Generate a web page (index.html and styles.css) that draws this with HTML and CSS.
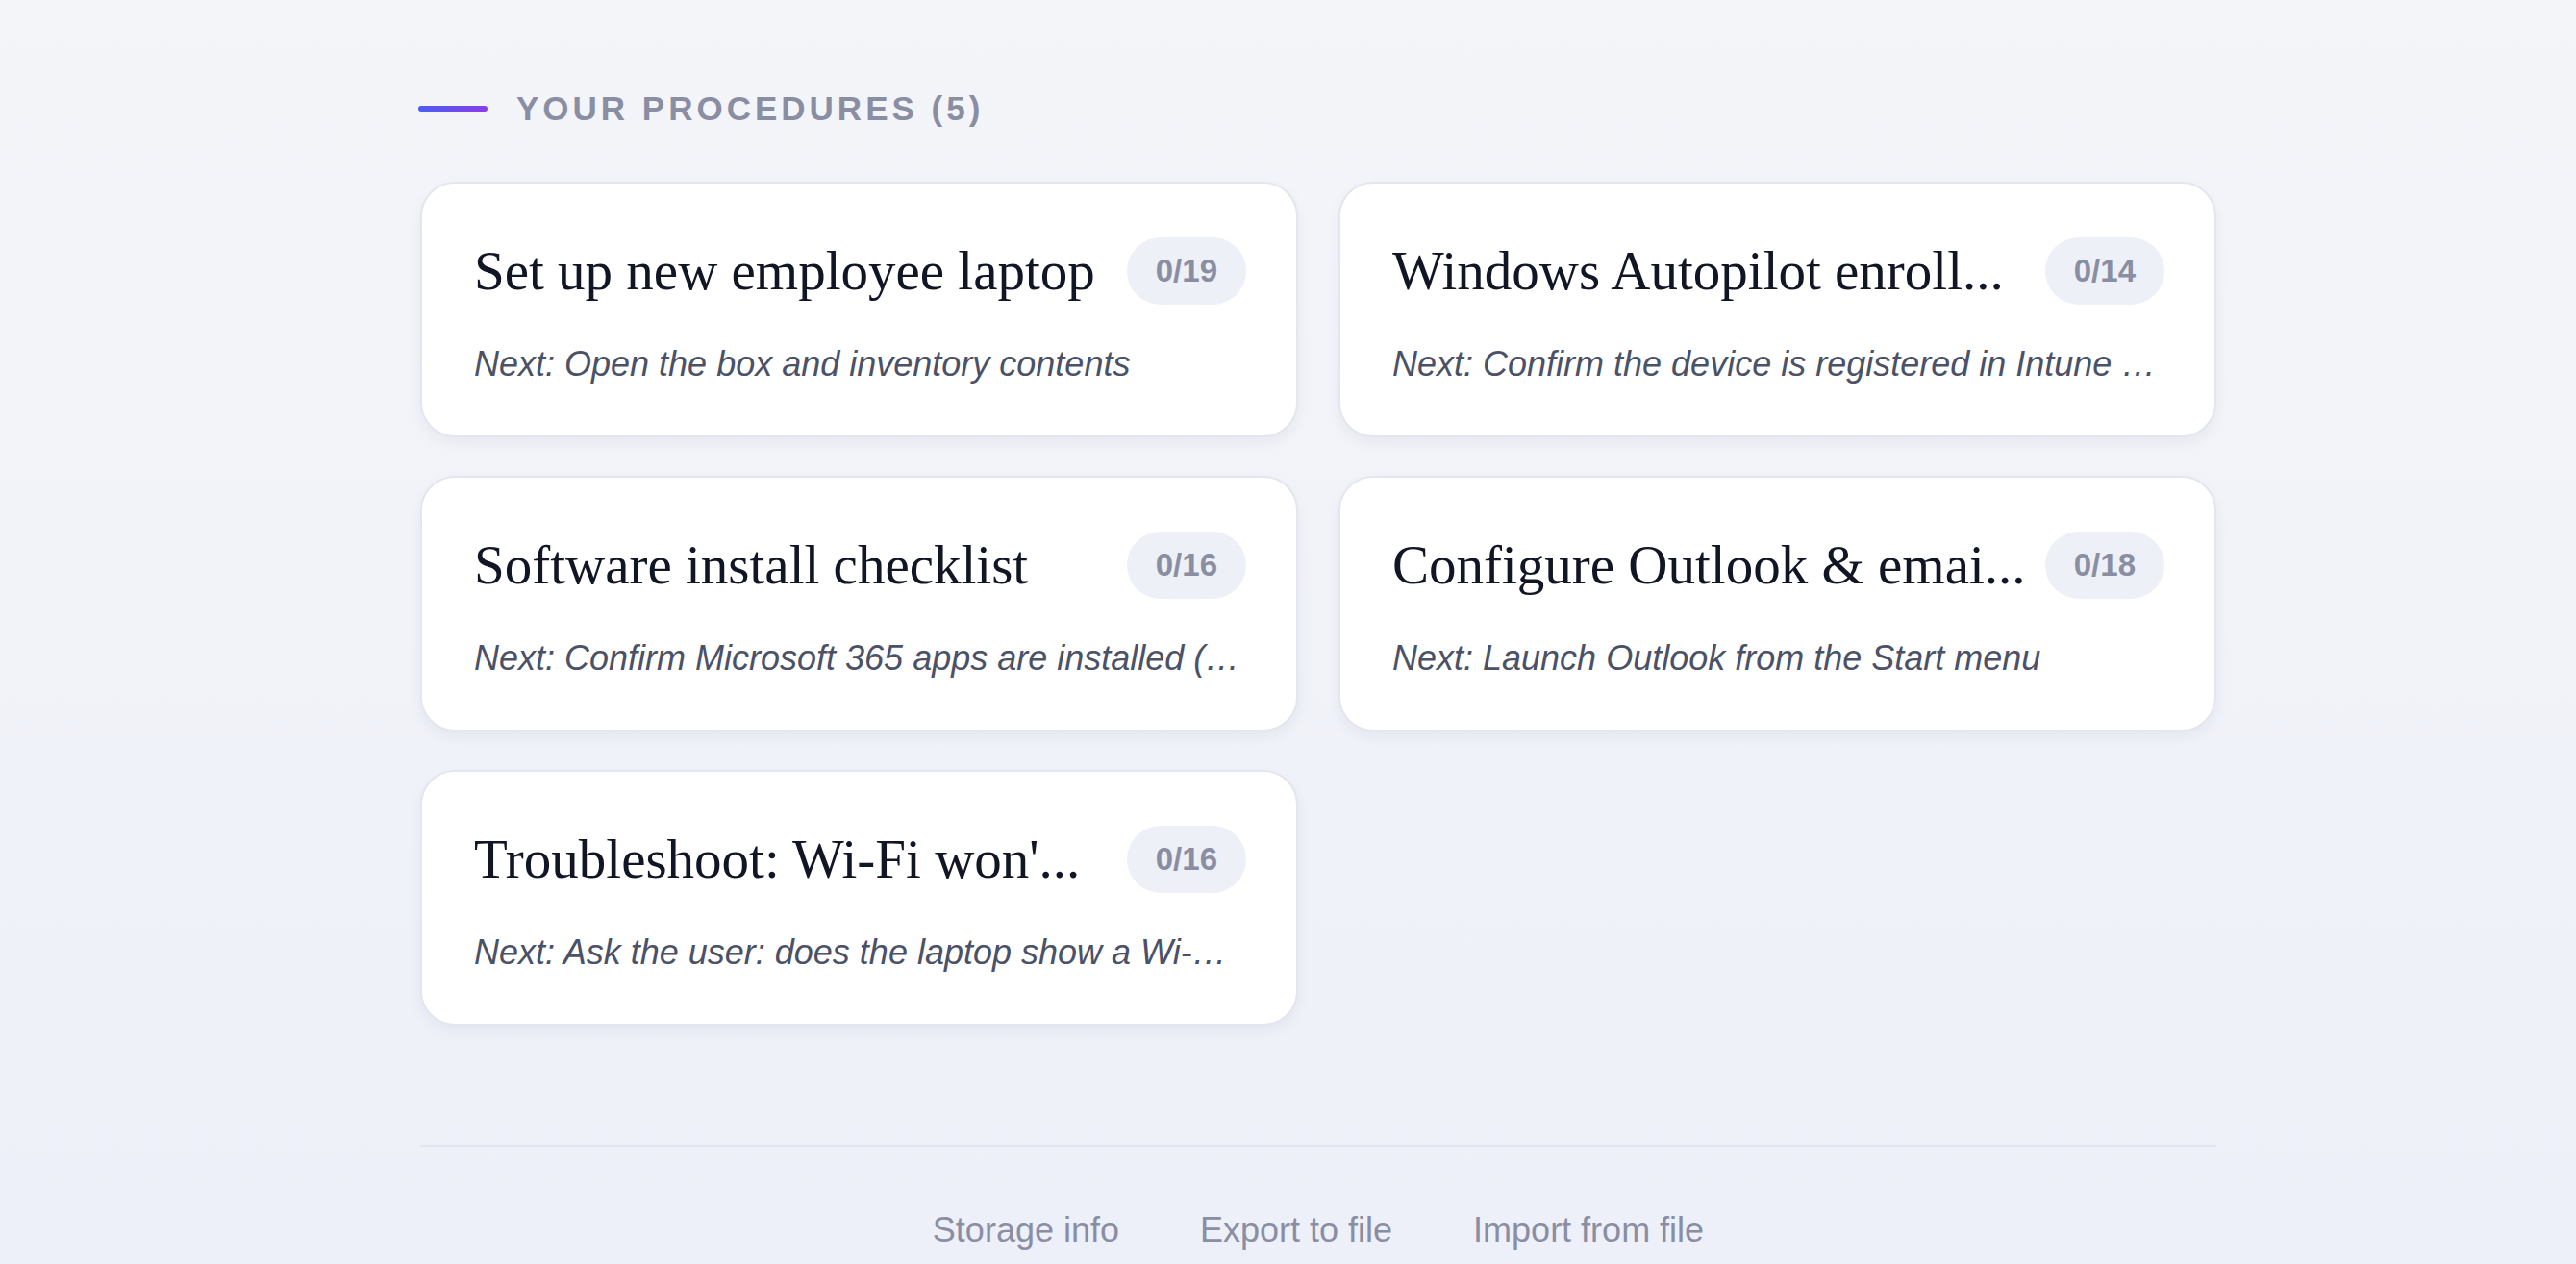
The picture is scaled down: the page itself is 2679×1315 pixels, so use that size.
FILE: index.html
```html
<!DOCTYPE html>
<html lang="en">
<head>
    <meta charset="UTF-8">
    <meta name="viewport" content="width=device-width, initial-scale=1.0">
    <title>Procedures</title>
<link rel="stylesheet" href="styles.css">
</head>
<body>
    <div id="page">
        <div class="section-head">
            <span class="head-bar"></span>
            <h2>Your procedures (5)</h2>
        </div>

        <div class="cards">
            <div class="card">
                <div class="card-top">
                    <h3>Set up new employee laptop</h3>
                    <span class="count">0/19</span>
                </div>
                <p class="next">Next: Open the box and inventory contents</p>
            </div>
            <div class="card">
                <div class="card-top">
                    <h3>Windows Autopilot enroll...</h3>
                    <span class="count">0/14</span>
                </div>
                <p class="next">Next: Confirm the device is registered in Intune (Devices &gt; Enroll devices)</p>
            </div>
            <div class="card">
                <div class="card-top">
                    <h3>Software install checklist</h3>
                    <span class="count">0/16</span>
                </div>
                <p class="next">Next: Confirm Microsoft 365 apps are installed (Word, Excel, Outlook)</p>
            </div>
            <div class="card">
                <div class="card-top">
                    <h3>Configure Outlook &amp; emai...</h3>
                    <span class="count">0/18</span>
                </div>
                <p class="next">Next: Launch Outlook from the Start menu</p>
            </div>
            <div class="card">
                <div class="card-top">
                    <h3>Troubleshoot: Wi-Fi won'...</h3>
                    <span class="count">0/16</span>
                </div>
                <p class="next">Next: Ask the user: does the laptop show a Wi-Fi icon in the taskbar?</p>
            </div>
        </div>

        <div class="footer">
            <a href="#">Storage info</a>
            <a href="#">Export to file</a>
            <a href="#">Import from file</a>
        </div>
    </div>
</body>
</html>
```

FILE: styles.css
```css
:root {
    --bg-top: #f4f5f9;
    --bg-bottom: #edf0f8;
    --card-bg: #ffffff;
    --card-border: #e3e6ee;
    --title-color: #111625;
    --text-muted: #4b5166;
    --grey: #898ea3;
    --pill-bg: #eef0f7;
}

html {
    min-height: 100%;
    background: linear-gradient(180deg, var(--bg-top), var(--bg-bottom));
}

body {
    margin: 0;
    padding: 0;
    font-family: 'Liberation Sans', Arial, sans-serif;
    color: var(--title-color);
}

#page {
    width: 1868px;
    margin-left: 437px;
    padding-top: 91px;
}

.section-head {
    display: flex;
    align-items: center;
    height: 44px;
    margin-bottom: 54px;
}

.head-bar {
    width: 72px;
    height: 6px;
    border-radius: 3px;
    margin-left: -2px;
    margin-right: 30px;
    background: linear-gradient(to right, #4a5ff1, #8b3de8);
}

.section-head h2 {
    margin: 0;
    font-size: 35px;
    line-height: 44px;
    font-weight: bold;
    text-transform: uppercase;
    letter-spacing: 4px;
    color: var(--grey);
}

.cards {
    display: grid;
    grid-template-columns: 1fr 1fr;
    gap: 40px 42px;
}

.card {
    background: var(--card-bg);
    border: 2px solid var(--card-border);
    border-radius: 36px;
    padding: 56px 52px 49px 54px;
    box-shadow: 0 6px 14px rgba(30, 40, 80, 0.05);
    min-width: 0;
}

.card-top {
    display: flex;
    align-items: center;
    justify-content: space-between;
    gap: 16px;
}

.card-top h3 {
    margin: 0;
    font-family: 'Liberation Serif', Georgia, serif;
    font-weight: normal;
    font-size: 57px;
    line-height: 70px;
    white-space: nowrap;
    color: var(--title-color);
}

.count {
    flex-shrink: 0;
    height: 70px;
    line-height: 70px;
    padding: 0 30px;
    border-radius: 35px;
    background: var(--pill-bg);
    color: var(--grey);
    font-size: 33px;
    font-weight: bold;
}

.next {
    margin: 37px 0 0;
    font-size: 36px;
    line-height: 50px;
    font-style: italic;
    color: var(--text-muted);
    white-space: nowrap;
    overflow: hidden;
    text-overflow: ellipsis;
}

.footer {
    margin-top: 124px;
    border-top: 2px solid #e2e5ee;
    padding-top: 62px;
    display: flex;
    justify-content: center;
    gap: 84px;
}

.footer a {
    font-size: 36px;
    line-height: 50px;
    color: var(--grey);
    text-decoration: none;
}
```
